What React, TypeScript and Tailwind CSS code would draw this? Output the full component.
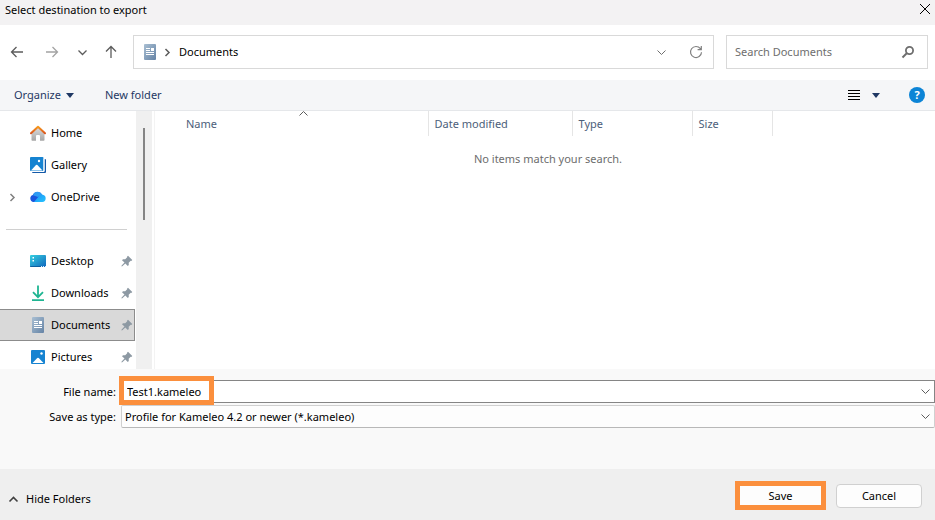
import type { ReactNode } from "react";

type IconProps = { className?: string };

function Chevron({ className = "", d = "M1.5 3.5 5.5 7.5 9.5 3.5" }: IconProps & { d?: string }) {
  return (
    <svg viewBox="0 0 11 11" className={`size-[11px] shrink-0 fill-none stroke-current ${className}`} aria-hidden="true">
      <path d={d} />
    </svg>
  );
}

const RIGHT = "M3.5 2 7 5.5 3.5 9";
const UP = "M1.5 7.5 5.5 3.5 9.5 7.5";

function Arrow({ d, className = "" }: IconProps & { d: string }) {
  return (
    <svg viewBox="0 0 14 14" className={`size-3.5 fill-none stroke-current ${className}`} strokeWidth="1.3" aria-hidden="true">
      <path d={d} />
    </svg>
  );
}

function Caret() {
  return (
    <svg viewBox="0 0 8 5" className="h-[5px] w-2 shrink-0 fill-[#1f3864]" aria-hidden="true">
      <path d="M0 0h8L4 5z" />
    </svg>
  );
}

function DocumentIcon() {
  return (
    <svg viewBox="0 0 16 16" className="size-4 shrink-0" aria-hidden="true">
      <defs>
        <linearGradient id="doc" x1="0" y1="0" x2="1" y2="1">
          <stop offset="0" stopColor="#a9bfd3" />
          <stop offset="1" stopColor="#6583a5" />
        </linearGradient>
      </defs>
      <rect x="2" width="12" height="16" rx="1" fill="url(#doc)" />
      <path d="M4 4.5h4M4 6.5h4M4 8.5h8M4 10.5h8" stroke="#fff" strokeWidth="1" />
      <rect x="9" y="4" width="3" height="3" fill="#fff" />
    </svg>
  );
}

function HomeIcon() {
  return (
    <svg viewBox="0 0 16 16" className="size-4 shrink-0" aria-hidden="true">
      <defs>
        <linearGradient id="wall" x1="0" y1="0" x2="0" y2="1">
          <stop offset="0" stopColor="#dedede" />
          <stop offset="1" stopColor="#a6a6a6" />
        </linearGradient>
        <linearGradient id="roof" x1="0" y1="0" x2="0" y2="1">
          <stop offset="0" stopColor="#f89a1c" />
          <stop offset="1" stopColor="#d9541e" />
        </linearGradient>
      </defs>
      <path d="M8 2 14.500 7.500V15a.8.8 0 0 1-.8.8H10V11a1 1 0 0 0-1-1H7a1 1 0 0 0-1 1v4.800H2.300a.8.8 0 0 1-.8-.8V7.500z" fill="url(#wall)" />
      <path d="M1 8.300 8 1.700 15 8.300" fill="none" stroke="url(#roof)" strokeWidth="2" strokeLinecap="round" strokeLinejoin="round" />
    </svg>
  );
}

function GalleryIcon() {
  return (
    <svg viewBox="0 0 16 16" className="size-4 shrink-0" aria-hidden="true">
      <path d="M14.500 2h.5a1 1 0 0 1 1 1V15a1 1 0 0 1-1 1H3a1 1 0 0 1-1-1v-.5h12.500z" fill="#1459a8" />
      <rect width="13.500" height="14" rx="1" fill="#1683d1" />
      <path d="M1 13.500 6 8a1 1 0 0 1 1.400 0L12.500 13.500z" fill="#fff" />
      <circle cx="9" cy="4" r="1.200" fill="#fff" />
      <path d="M14 1.500v13H1.500" fill="none" stroke="#fff" />
    </svg>
  );
}

function CloudIcon() {
  return (
    <svg viewBox="0 0 16 16" className="size-4 shrink-0" aria-hidden="true">
      <defs>
        <linearGradient id="cloud" x1="0" y1="0" x2="1" y2="1">
          <stop offset="0" stopColor="#1c93f5" />
          <stop offset="1" stopColor="#25c4ff" />
        </linearGradient>
      </defs>
      <path d="M3.500 13A3.600 3.600 0 0 1 2.800 6 5 5 0 0 1 12 6l-3 3-4 4z" fill="#1a55dd" />
      <path d="M3 6.200a5 5 0 0 1 9.200-.8L8 8z" fill="#2d9bf3" />
      <path d="M4 13 9.500 6.500c1-1 2.300-1 3.200-.8A3.700 3.700 0 0 1 12.400 13z" fill="url(#cloud)" />
    </svg>
  );
}

function DesktopIcon() {
  return (
    <svg viewBox="0 0 16 16" className="size-4 shrink-0" aria-hidden="true">
      <defs>
        <linearGradient id="desk" x1="0" y1="0" x2="1" y2="1">
          <stop offset="0" stopColor="#35d0e0" />
          <stop offset="1" stopColor="#1066bd" />
        </linearGradient>
      </defs>
      <rect y="2" width="16" height="12" rx="1" fill="url(#desk)" />
      <path d="M2.500 4H4v1.500H2.500zM2.500 7H4v1.500H2.500z" fill="#fff" />
      <path d="M0 13h11v1H1a1 1 0 0 1-1-1z" fill="#0d5f9f" />
      <path d="M11 13.500h1M13 13.500h1M15 13.500h1" stroke="#d8ecff" />
    </svg>
  );
}

function DownloadIcon() {
  return (
    <svg viewBox="0 0 16 16" className="size-4 shrink-0 fill-none stroke-[#1fb592]" strokeWidth="1.800" aria-hidden="true">
      <path d="M8 .5v11.500M3 7.200l5 5 5-5M2 15.100h12" />
    </svg>
  );
}

function PicturesIcon() {
  return (
    <svg viewBox="0 0 16 16" className="size-4 shrink-0" aria-hidden="true">
      <rect x="1" y="1" width="14" height="14" rx="1" fill="#1683d1" />
      <path d="M2.500 14 7.300 9a1 1 0 0 1 1.400 0l4.800 5z" fill="#fff" />
      <circle cx="11.500" cy="4.500" r="1.200" fill="#fff" />
    </svg>
  );
}

function PinIcon() {
  return (
    <svg viewBox="0 0 12 12" className="size-3 shrink-0 fill-[#8d99a3]" aria-hidden="true">
      <path d="M7 .7 11.300 5l-1 1-.6-.2-2 2 .1 2.100-1 1-2.500-2.500-3 2.900-.8.100.1-.8 2.900-3L1 5.200l1-1 2.200.1 2-2L6 1.700z" />
    </svg>
  );
}

type Place = { name: string; icon: ReactNode; pinned?: boolean; expandable?: boolean; active?: boolean };

const places: Place[] = [
  { name: "Home", icon: <HomeIcon /> },
  { name: "Gallery", icon: <GalleryIcon /> },
  { name: "OneDrive", icon: <CloudIcon />, expandable: true },
];

const pinnedPlaces: Place[] = [
  { name: "Desktop", icon: <DesktopIcon />, pinned: true },
  { name: "Downloads", icon: <DownloadIcon />, pinned: true },
  { name: "Documents", icon: <DocumentIcon />, pinned: true, active: true },
  { name: "Pictures", icon: <PicturesIcon />, pinned: true },
];

function PlaceRow({ name, icon, pinned, expandable, active }: Place) {
  return (
    <li>
      <button
        className={`flex h-8 w-full items-center border-y border-r pr-px pl-[7px] text-left ${
          active ? "border-[#8c8c8c] bg-[#d9d9d9]" : "border-transparent"
        }`}
      >
        <span className="w-[23px] shrink-0 text-[#808080]">
          {expandable && <Chevron d={RIGHT} className="stroke-[1.5]" />}
        </span>
        {icon}
        <span className="ml-[5px] flex-1">{name}</span>
        {pinned && <PinIcon />}
      </button>
    </li>
  );
}

export default function App() {
  return (
    <main className="flex h-screen min-h-[480px] flex-col bg-white font-['Noto_Sans','Open_Sans',sans-serif] text-[11px] leading-4 text-black">
      <header className="flex h-[25px] shrink-0 items-start justify-between bg-[#f3f2f3] pt-0.5 pr-1 pl-[5px]">
        <h1>Select destination to export</h1>
        <button aria-label="Close" className="mt-px">
          <svg viewBox="0 0 12 12" className="size-3 fill-none stroke-black" aria-hidden="true">
            <path d="M1 1 11 11M11 1 1 11" />
          </svg>
        </button>
      </header>

      <nav className="flex h-[55px] shrink-0 items-center pr-[7px] pb-px pl-2.5">
        <div className="flex w-[123px] shrink-0 items-center text-[#5c5c5c]">
          <button aria-label="Back">
            <Arrow d="M13 7H1.500M6.500 2l-5 5 5 5" />
          </button>
          <button aria-label="Forward" className="ml-[21px] text-[#a3a3a3]">
            <Arrow d="M1 7h11.500M7.500 2l5 5-5 5" />
          </button>
          <button aria-label="Recent locations" className="ml-[18px]">
            <Chevron className="stroke-[1.3]" />
          </button>
          <button aria-label="Up" className="ml-4">
            <Arrow d="M7 13V1.500M2 6.500l5-5 5 5" />
          </button>
        </div>
        <div className="flex h-[34px] flex-1 items-center border border-[#d9d9d9] pr-2.5 pl-2">
          <DocumentIcon />
          <Chevron d={RIGHT} className="ml-1 stroke-[1.5] text-[#5c5c5c]" />
          <span className="ml-1.5 flex-1">Documents</span>
          <button aria-label="Previous locations" className="text-[#6e6e6e]">
            <Chevron />
          </button>
          <button aria-label="Refresh" className="ml-[22px] text-[#808080]">
            <svg viewBox="0 0 14 14" className="size-3.5 fill-none stroke-current" strokeWidth="1.200" aria-hidden="true">
              <path d="M12.500 7.200A5.500 5.500 0 1 1 11.400 3.700L12 4.500M12.300 1v3.700H8.600" />
            </svg>
          </button>
        </div>
        <label className="ml-3 flex h-[34px] w-[202px] items-center border border-[#d9d9d9] pr-3 pl-2">
          <input
            type="search"
            aria-label="Search Documents"
            placeholder="Search Documents"
            className="min-w-0 flex-1 outline-none placeholder:text-[#6e6e6e]"
          />
          <svg viewBox="0 0 14 14" className="size-3.5 fill-none stroke-[#6e6e6e]" strokeWidth="1.800" aria-hidden="true">
            <circle cx="8.500" cy="5.500" r="3.600" />
            <path d="M6 8 1.500 12.500" strokeWidth="2" />
          </svg>
        </label>
      </nav>

      <div className="flex h-[31px] shrink-0 items-center border-b border-[#e5e7ea] bg-[#f5f6f8] pr-2.5 pl-3.5 text-[#1f3864]">
        <button className="flex items-center gap-[5px]">
          Organize
          <Caret />
        </button>
        <button className="ml-[31px]">New folder</button>
        <button aria-label="Change view" className="ml-auto flex items-center gap-3">
          <svg viewBox="0 0 12 10" className="h-2.5 w-3 stroke-black" aria-hidden="true">
            <path d="M0 .5h12M0 3.500h12M0 6.500h12M0 9.500h12" />
          </svg>
          <Caret />
        </button>
        <button
          aria-label="Help"
          className="ml-[29px] size-4 rounded-full bg-[#0c84d6] text-center font-bold text-white"
        >
          ?
        </button>
      </div>

      <section className="flex min-h-0 flex-1">
        <aside className="flex w-[152px] shrink-0 overflow-hidden">
          <div className="min-w-0 flex-1 pt-1.5 pr-px">
            <ul>
              {places.map((place) => (
                <PlaceRow key={place.name} {...place} />
              ))}
            </ul>
            <hr className="my-4 mr-2 ml-1.5 -mb-px h-px border-0 bg-[#d0d0d0]" />
            <ul className="pt-4">
              {pinnedPlaces.map((place) => (
                <PlaceRow key={place.name} {...place} />
              ))}
            </ul>
          </div>
          <div className="w-4 bg-[#f0f0f0] pt-[17px]">
            <div className="mx-auto h-[92px] w-0.5 bg-[#858585]" />
          </div>
        </aside>
        <div className="ml-0.5 min-w-0 flex-1 border-l border-[#f3f3f3]">
          <table className="w-full table-fixed text-left">
            <thead>
              <tr className="h-[25px] text-[#4c607a]">
                <th className="relative w-[273px] border-r border-[#e5e5e5] p-0 pl-[31px] font-normal">
                  Name
                  <Chevron d={UP} className="absolute top-[-3px] left-[143px] text-[#5c5c5c]" />
                </th>
                <th className="w-36 border-r border-[#e5e5e5] p-0 pl-1.5 font-normal">Date modified</th>
                <th className="w-[120px] border-r border-[#e5e5e5] p-0 pl-1.5 font-normal">Type</th>
                <th className="w-20 border-r border-[#e5e5e5] p-0 pl-1.5 font-normal">Size</th>
                <td />
              </tr>
            </thead>
            <tbody>
              <tr>
                <td colSpan={5} className="pt-[15px] pl-1.5 text-center text-[#6d6d6d]">
                  No items match your search.
                </td>
              </tr>
            </tbody>
          </table>
        </div>
      </section>

      <form className="shrink-0">
        <div className="grid h-[100px] grid-cols-[116px_1fr] content-start items-center gap-x-[5px] gap-y-0.5 bg-[#f9f9f9] pt-[11px]">
          <label htmlFor="file-name" className="text-right">
            File name:
          </label>
          <div className="relative flex items-center">
            <input
              id="file-name"
              defaultValue="Test1.kameleo"
              className="h-[23px] w-full border border-[#858585] bg-white pr-6 pl-[5px] outline-none"
            />
            <Chevron className="absolute right-1 text-[#5c5c5c]" />
            <span className="pointer-events-none absolute -top-1 -left-0.5 h-[29px] w-[95px] border-[5px] border-[#fb8f3d]" />
          </div>
          <label htmlFor="file-type" className="text-right">
            Save as type:
          </label>
          <div className="relative flex items-center">
            <select
              id="file-type"
              className="h-[23px] w-full appearance-none rounded-xs border border-[#d0d0d0] border-b-[#b8b8b8] bg-[#fdfdfd] pl-[3px] outline-none"
            >
              <option>Profile for Kameleo 4.2 or newer (*.kameleo)</option>
            </select>
            <Chevron className="pointer-events-none absolute right-1 text-[#5c5c5c]" />
          </div>
        </div>
        <div className="flex h-[51px] items-start bg-[#efefef] pt-3 pr-[13px] pl-2">
          <button type="button" className="mt-2.5 flex items-center gap-[7px]">
            <Chevron d={UP} className="stroke-[1.6] text-[#404040]" />
            Hide Folders
          </button>
          <button type="submit" className="ml-auto h-[29px] w-[91px] border-[5px] border-[#fb8f3d] bg-[#fdfdfd]">
            Save
          </button>
          <button type="button" className="mt-[3px] ml-2.5 h-6 w-[86px] rounded border border-[#d0d0d0] bg-[#fdfdfd]">
            Cancel
          </button>
        </div>
      </form>
    </main>
  );
}
